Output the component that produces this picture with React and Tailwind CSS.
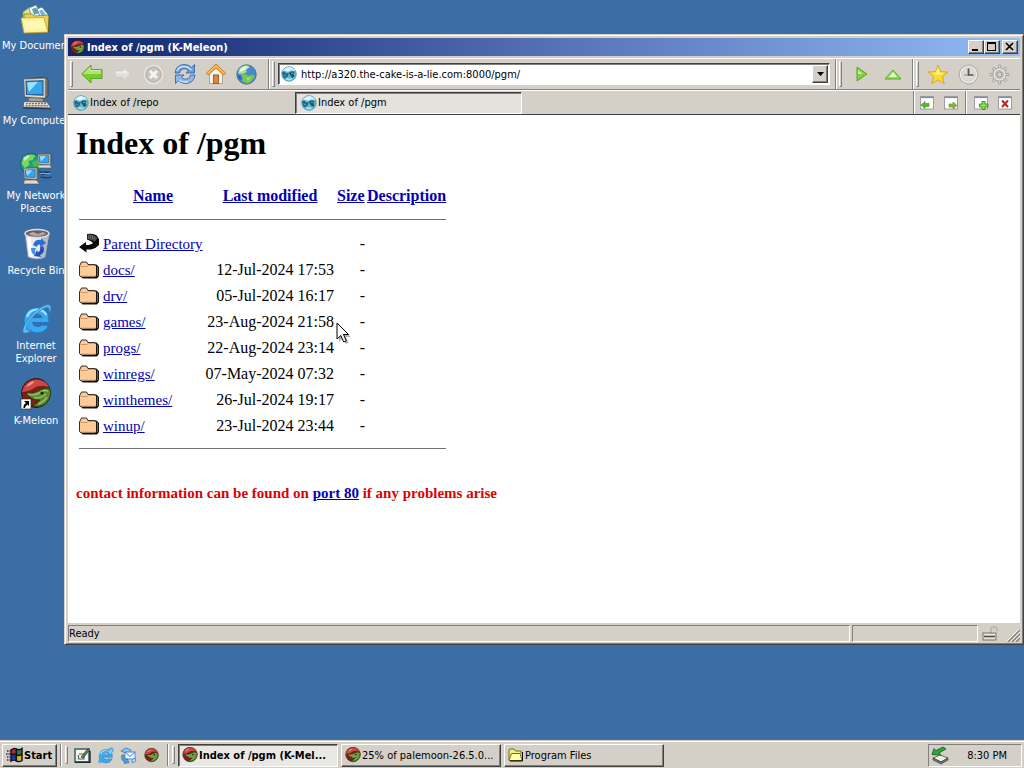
import { useState } from 'react'

const raised = "bg-[#d4d0c8] border border-t-white border-l-white border-r-[#404040] border-b-[#404040] shadow-[inset_-1px_-1px_0_#808080]"
const pressed = "border border-t-[#404040] border-l-[#404040] border-r-white border-b-white shadow-[inset_1px_1px_0_#808080]"
const sunken = "border border-t-[#808080] border-l-[#808080] border-r-white border-b-white"
const iconButton = "w-[31px] h-6 shrink-0 flex items-center justify-center"
const linkClass = "text-[#0000b8] underline"

const entries = [
    { name: 'docs/', date: '12-Jul-2024 17:53' },
    { name: 'drv/', date: '05-Jul-2024 16:17' },
    { name: 'games/', date: '23-Aug-2024 21:58' },
    { name: 'progs/', date: '22-Aug-2024 23:14' },
    { name: 'winregs/', date: '07-May-2024 07:32' },
    { name: 'winthemes/', date: '26-Jul-2024 19:17' },
    { name: 'winup/', date: '23-Jul-2024 23:44' },
]

/* ---------- Desktop icons ---------- */

function DocumentsIcon() {
    return (
        <svg width="32" height="32" viewBox="0 0 32 32" aria-hidden="true">
            <path d="M3 9 L10 4 L15 9 L15 15 L3 16Z" fill="#d9e87a" stroke="#8a9a3a" strokeWidth=".6" />
            <path d="M9 5 L16 2 L22 12 L12 16Z" fill="#f2f6fa" stroke="#5f7f95" strokeWidth=".7" />
            <path d="M12 6 L16 4.500 L19 10 L14 12Z" fill="#54a6b8" />
            <path d="M17 6 L22 4 L30 14 L22 18Z" fill="#fff" stroke="#4b6f94" strokeWidth=".8" />
            <path d="M19 8 L22 6.500 L27 13 L23 15Z" fill="#70b5dd" />
            <path d="M4 11 L12 11 L14 13 L29 12 L28 29 L4 29Z" fill="#e9cf5a" stroke="#9c8420" strokeWidth=".8" />
            <path d="M1 15 L24 14.500 L28 29 L4 30Z" fill="#fdf196" stroke="#c2a63a" strokeWidth=".8" />
            <path d="M4 18 L23 17.500 L25 26 L6 27Z" fill="#fff7b5" />
            <path d="M28 12.500 L29.500 13 L28.500 29" fill="none" stroke="#6b5a10" strokeWidth="1" />
        </svg>
    )
}

function Monitor({ x = 0, y = 0, s = 1 }) {
    return (
        <g transform={`translate(${x} ${y}) scale(${s})`}>
            <path d="M3 3 L24 1 L27 3 L27 19 L24 21 L4 20Z" fill="#77776f" stroke="#3b3b3b" strokeWidth=".8" />
            <path d="M3 3 L24 2.500 L24 20.500 L4 19.500Z" fill="#e6e2da" stroke="#9b978e" strokeWidth=".6" />
            <path d="M5 5 L22 4.500 L22 18 L5.500 17.500Z" fill="#38a4ea" stroke="#174a7c" strokeWidth="1" />
            <path d="M6 6 L17 5.500 L8 15Z" fill="#9be0ff" />
        </g>
    )
}

function ComputerIcon() {
    return (
        <svg width="32" height="34" viewBox="0 0 32 32" preserveAspectRatio="none" className="-mt-[2px]" aria-hidden="true">
            <path d="M9 20 L22 20 L24 24 L8 24Z" fill="#a5a199" stroke="#55534e" strokeWidth=".7" />
            <Monitor x="1" y="0" />
            <path d="M4 24 L27 24.500 L31 30 L3 29.500Z" fill="#e8e4dc" stroke="#55534e" strokeWidth=".8" />
            <path d="M6 26 H26 M5.500 28 H28" stroke="#77736b" strokeWidth="1.200" strokeDasharray="2 1" />
            <path d="M3 30 L31 31" stroke="#24364c" strokeWidth="1" />
        </svg>
    )
}

function NetworkIcon() {
    return (
        <svg width="34" height="32" viewBox="0 0 33 32" aria-hidden="true">
            <circle cx="11.500" cy="11" r="10.500" fill="#1b9c86" stroke="#0e5a5c" strokeWidth=".8" />
            <path d="M4 4 Q10 0 16 2.500 L13 7 L9 8 L10 12 L5 15 L2 10Z" fill="#7cd65a" />
            <path d="M12 9 L18 7 L20 12 L15 15Z" fill="#45b95a" />
            <path d="M4 5 L9 2 L10 4 L5 8Z" fill="#c6f2c0" />
            <Monitor x="17" y="0" s=".56" />
            <path d="M18 12 L31 12 L32 15 L19 15Z" fill="#ddd9d0" stroke="#55534e" strokeWidth=".6" />
            <Monitor x="3" y="14" s=".58" />
            <path d="M5 27 L17 27 L20 31 L4 31Z" fill="#ddd9d0" stroke="#55534e" strokeWidth=".6" />
            <path d="M20 19 L31 19 M22 22 L29 19 M21 24 L28 25 L32 24" stroke="#132f60" strokeWidth="1.200" fill="none" />
            <path d="M21 20.500 L31 20.500" stroke="#8fc6f0" strokeWidth=".8" />
        </svg>
    )
}

function RecycleIcon() {
    return (
        <svg width="32" height="32" viewBox="0 0 32 32" aria-hidden="true">
            <path d="M5 5 L29 6 L25 29 Q17 33 8 29Z" fill="#e7e9ee" stroke="#8a8f9c" strokeWidth=".8" />
            <path d="M22 7 L29 6 L25 29 L20 31Z" fill="#b3b8c6" />
            <path d="M7 9 L11 10 L12 29 L9 28Z" fill="#fff" />
            <ellipse cx="17" cy="5.500" rx="12" ry="4" fill="#63636d" stroke="#e4dcdc" strokeWidth="1.400" />
            <path d="M8 6 L13 4 L18 6 L23 4 L26 6 Q17 10 8 6Z" fill="#b9a5a2" />
            <path d="M13 17 Q15 11 21 12 L21 10 L26 15 L20 19 L20 16.500 Q17 16 17 19Z" fill="#2c6fd0" />
            <path d="M23 18 Q26 24 20 27 L21 29 L14 28 L17 22 L18 24.500 Q21 22 20 19Z" fill="#2451b2" />
            <path d="M11 20 L16 20 L15 23 Q15 25 16 27 Q11 27 11 20Z" fill="#4a90e6" />
        </svg>
    )
}

function ExplorerIcon({ size = 32 }) {
    return (
        <svg width={size} height={size} viewBox="0 0 32 32" aria-hidden="true">
            <path d="M29 19.500 H12.500 Q13 23.500 17.500 23.500 Q20.500 23.500 22 22 L28.500 22.500 Q25 30 17 30 Q4 29 4 17.500 Q4.500 5 17 4.500 Q30 5.500 29 19.500Z M12.500 14.500 H22 Q21 11 17 11 Q13.500 11 12.500 14.500Z" fill="#3aa9ee" stroke="#1a6fc0" strokeWidth=".8" fillRule="evenodd" />
            <path d="M7 14 Q9 7 17 6.500 Q24 7 26.500 12" fill="none" stroke="#a6e4ff" strokeWidth="2.200" />
            <path d="M5 21 Q1 29 4 30 Q7 31 12 27 Q5 29 7 22 Q14 10 25 5 Q30 3 29 9 L30 10 Q33 1 27 1.500 Q15 5 5 21Z" fill="#5cb9ee" stroke="#1e73bd" strokeWidth=".5" />
        </svg>
    )
}

function MeleonIcon({ size = 16, shortcut = false }) {
    return (
        <svg width={size} height={size} viewBox="0 0 32 32" className="shrink-0" aria-hidden="true">
            <circle cx="16" cy="15" r="14.500" fill="#7c1f18" stroke="#3a120c" strokeWidth="1" />
            <path d="M2 14 Q4 3 16 1.500 Q26 2 29 9 Q20 6 14 10 Q8 14 2 14Z" fill="#c94a44" />
            <path d="M6 9 Q9 4 14 3 Q14 6 6 9Z" fill="#f5a196" />
            <path d="M5 14 Q11 17 18 13 Q24 9 30 11 Q32 18 27 24 Q20 31 12 27 Q18 26 20 22 Q12 23 5 14Z" fill="#5c8a34" stroke="#1d3a10" strokeWidth=".8" />
            <path d="M8 16 Q14 18 19 15 Q24 11 28 13 M14 20 Q22 20 26 16 M18 26 Q24 24 27 19" fill="none" stroke="#93bf5c" strokeWidth="1.600" />
            <circle cx="22" cy="15" r="1.600" fill="#162b0c" />
            {shortcut && (
                <g>
                    <rect x="1" y="21" width="10" height="10" fill="#fff" stroke="#222" strokeWidth=".6" />
                    <path d="M4 23 H9 V28 L7.500 26.500 Q5 28 5 30 L3.500 30 Q3 27 6 25Z" fill="#000" />
                </g>
            )}
        </svg>
    )
}

/* ---------- Browser icons ---------- */

function PageGlobe() {
    return (
        <svg width="16" height="16" viewBox="0 0 16 16" className="shrink-0" aria-hidden="true">
            <circle cx="8" cy="8" r="7.300" fill="#5fb4ce" stroke="#4f97b0" strokeWidth=".8" />
            <path d="M1.500 5.500 Q4 .8 9 1.100 Q13 2 14.500 5 L10 4.500 L7 6 L4 5Z" fill="#d6eff7" />
            <path d="M1 6 L3.500 5.500 L5 7.500 L7.500 7 L7 10 L4.500 12.500 L2.500 11.500Z" fill="#236880" />
            <path d="M7.500 7 L10 5.500 L13.500 5.500 L12.500 8 L13.500 10.500 L11 12 L9.500 9.500Z" fill="#1d5a72" />
            <path d="M4 13 Q6 11.500 8.500 12.500 L12 12.500 Q9 16 4 13Z" fill="#a8e2f2" />
            <path d="M5 4 L9 3" stroke="#fff" strokeWidth="1.200" />
            <path d="M3 9 L5 10 M10 7.500 L12 7" stroke="#66b2c8" strokeWidth=".9" />
        </svg>
    )
}

function BackIcon() {
    return (
        <svg width="22" height="20" viewBox="0 0 22 20" aria-hidden="true">
            <path d="M.7 10 L10 1 V5.500 H21 V14.500 H10 V19Z" fill="#79cc2c" stroke="#5da42c" />
            <path d="M3 10 L9 4 V7 H20 V10Z" fill="#aee86a" />
            <path d="M2.500 10 L9 3.500 V6.500 H20" fill="none" stroke="#e2fac4" strokeWidth=".8" />
        </svg>
    )
}

function ForwardIcon() {
    return (
        <svg width="18" height="16" viewBox="0 0 22 20" aria-hidden="true">
            <path d="M21 10 L11 1 V6 H1 V14 H11 V19Z" fill="#e2e0db" stroke="#c9c5be" />
            <path d="M2 7 H12 V4 L18 9 H2Z" fill="#efede9" />
        </svg>
    )
}

function StopIcon() {
    return (
        <svg width="21" height="21" viewBox="0 0 21 21" aria-hidden="true">
            <circle cx="10.500" cy="10.500" r="9" fill="#c6c4bf" stroke="#e6e4e0" strokeWidth="1.500" />
            <circle cx="10.500" cy="10.500" r="7.500" fill="none" stroke="#aeaca6" strokeWidth=".8" />
            <path d="M7 7 L14 14 M14 7 L7 14" stroke="#f6f5f2" strokeWidth="3" />
        </svg>
    )
}

function ReloadIcon() {
    return (
        <svg width="22" height="22" viewBox="0 0 22 22" aria-hidden="true">
            <path d="M1 10 Q2 2 10 1.500 Q15 1.500 17.500 4.500 L20.500 1.500 V10 H12 L14.500 7.500 Q12 5 9 6 Q6 6.500 5.500 10Z" fill="#6d9fdc" stroke="#3a68a8" strokeWidth=".9" />
            <path d="M21 12 Q20 20 12 20.500 Q7 20.500 4.500 17.500 L1.500 20.500 V12 H10 L7.500 14.500 Q10 17 13 16 Q16 15.500 16.500 12Z" fill="#8ab8ec" stroke="#3a68a8" strokeWidth=".9" />
            <path d="M3 8 Q5 3 11 3.500 Q15 4 17.500 7 M5 17 Q9 20 14 18.500" fill="none" stroke="#cfe4fb" strokeWidth="1.400" />
        </svg>
    )
}

function HomeIcon() {
    return (
        <svg width="20" height="22" viewBox="0 0 20 22" aria-hidden="true">
            <path d="M3.500 10 L10 4 L16.500 10 V20.500 H3.500Z" fill="#f4f2ec" stroke="#98948a" strokeWidth=".8" />
            <rect x="7.500" y="12" width="5" height="8.500" fill="#d98a3e" stroke="#8e4b12" strokeWidth=".8" />
            <path d="M10 1 L19.500 10 L17.500 12 L10 5 L2.500 12 L.5 10Z" fill="#f9a63b" stroke="#c96e0d" strokeWidth=".8" />
            <path d="M2 10 L10 2.500 L18 10" fill="none" stroke="#ffd08a" strokeWidth=".8" />
        </svg>
    )
}

function WorldIcon() {
    return (
        <svg width="21" height="21" viewBox="0 0 21 21" aria-hidden="true">
            <circle cx="10.500" cy="10.500" r="9.700" fill="#4a88d0" stroke="#3f6ba4" strokeWidth=".9" />
            <path d="M2 9 Q3 2 10 1.300 Q13 1.500 14 3 L10 6 L11 8 L7 10 L3 10Z" fill="#a8dc90" />
            <path d="M5 10.500 L10 10 L12 12 L18 10.500 L18.500 13 Q15.500 18.500 11 19.500 L6 17 L7 14Z" fill="#76c84a" />
            <path d="M3.500 6.500 Q6 2 12 2.200 L10 5 L5 8Z" fill="#f0fbfa" opacity=".9" />
            <path d="M10 14 L15 13 L12 17Z" fill="#a6e07c" />
            <path d="M1.500 11 L4.500 12 L5.500 16 L3.500 15.500Z" fill="#2b5fb0" />
        </svg>
    )
}

function StarIcon() {
    return (
        <svg width="22" height="21" viewBox="0 0 22 21" aria-hidden="true">
            <path d="M11 1 L13.700 7.700 L21 8 L15.400 12.600 L17.300 19.700 L11 15.800 L4.700 19.700 L6.600 12.600 L1 8 L8.300 7.700Z" fill="#f8dc30" stroke="#cfa524" strokeWidth=".9" />
            <path d="M11 3 L12.800 8.700 L18 9 L11 11 L4 9 L9.200 8.700Z" fill="#fff08a" />
        </svg>
    )
}

function ClockIcon() {
    return (
        <svg width="21" height="21" viewBox="0 0 21 21" aria-hidden="true">
            <circle cx="10.500" cy="10.500" r="9.300" fill="#f0efec" stroke="#b4b2ad" strokeWidth="1.200" />
            <circle cx="10.500" cy="10.500" r="7" fill="#dcdad5" stroke="#c8c6c0" strokeWidth=".7" />
            <path d="M10.500 4.500 V11 H15.500" fill="none" stroke="#55534f" strokeWidth="1.700" />
            <path d="M6 11 H10" stroke="#8a8883" />
        </svg>
    )
}

function GearIcon() {
    return (
        <svg width="21" height="21" viewBox="0 0 21 21" aria-hidden="true">
            <path d="M10.500 .8 V5 M10.500 16 V20.200 M.8 10.500 H5 M16 10.500 H20.200 M3.600 3.600 L6.500 6.500 M14.500 14.500 L17.400 17.400 M17.400 3.600 L14.500 6.500 M6.500 14.500 L3.600 17.400" stroke="#a3a19c" strokeWidth="3" />
            <path d="M10.500 1.500 V5 M10.500 16 V19.500 M1.500 10.500 H5 M16 10.500 H19.500 M4 4 L6.500 6.500 M14.500 14.500 L17 17 M17 4 L14.500 6.500 M6.500 14.500 L4 17" stroke="#e4e2de" strokeWidth="1.200" />
            <circle cx="10.500" cy="10.500" r="5.200" fill="none" stroke="#a09e99" strokeWidth="3.600" />
            <circle cx="10.500" cy="10.500" r="5.200" fill="none" stroke="#e6e4e0" strokeWidth="2" />
            <circle cx="10.500" cy="10.500" r="2.600" fill="#d4d0c8" stroke="#8f8d88" strokeWidth=".8" />
        </svg>
    )
}

function TabPage({ children }) {
    return (
        <svg width="15" height="14" viewBox="0 0 15 14" aria-hidden="true">
            <rect x=".5" y=".5" width="13" height="12.500" fill="#fff" stroke="#9c9ca2" />
            <path d="M1 1.500 H13" stroke="#6a8cd0" strokeWidth="1.200" />
            {children}
        </svg>
    )
}

/* ---------- Directory listing icons ---------- */

function FolderIcon() {
    return (
        <svg width="20" height="22" viewBox="0 0 20 22" className="block" aria-hidden="true">
            <path d="M3 5 H9 L11 5.500 H17.500 L20 8 V17 L18 19.500 H3.500 L2 17Z" fill="#1a1208" />
            <path d="M.5 7 L2.500 3 H7.500 L9 5.500 H16 L17.500 7.500 V16.500 L16.500 18 H2 L.5 16.500Z" fill="#fccb98" stroke="#000" strokeWidth=".8" />
            <path d="M1.500 7.500 H8 L9.500 6.300 H16" fill="none" stroke="#c4885a" strokeWidth=".8" />
            <path d="M2 16.700 H16.500" stroke="#dba874" strokeWidth="1.200" strokeDasharray="1 1" />
            <path d="M18.500 8 V17" stroke="#8a5a30" strokeWidth="1" />
        </svg>
    )
}

function UpIcon() {
    return (
        <svg width="20" height="22" viewBox="0 0 20 22" className="block" aria-hidden="true">
            <path d="M8 1 Q17 0 19 4.500 L20 6 V12 Q17 15.500 12 16.500 H7.500 V19.500 L0 14 L7 9 V12 Q12 12 14 10 Q12 7.500 8 6.500Z" fill="#0a0a0a" />
            <path d="M8.500 1.500 Q15 1 18.500 5 L16 8.500 Q13 6.500 8.500 6Z" fill="#4a4a4a" />
            <path d="M9 3 H15 M9 5 H17" stroke="#999" strokeWidth=".7" strokeDasharray="1 1" />
        </svg>
    )
}

/* ---------- Pieces ---------- */

function DesktopIcon({ icon, label }) {
    return (
        <button type="button" className="h-[75px] pt-[3px] flex flex-col items-center gap-1 text-white">
            {icon}
            <span className="w-[68px] leading-[13px] text-center whitespace-pre">{label}</span>
        </button>
    )
}

function Gripper() {
    return <div className="w-[3px] my-[2px] self-stretch shrink-0 border border-t-white border-l-white border-r-[#808080] border-b-[#808080]" />
}

function Divider() {
    return <div className="w-[2px] self-stretch shrink-0 border-l border-l-[#808080] border-r border-r-white" />
}

function ToolButton({ label, children }) {
    return (
        <button type="button" aria-label={label} className={iconButton}>{children}</button>
    )
}

function SmallButton({ label, children }) {
    return (
        <button type="button" aria-label={label} className="w-6 h-5 flex items-center justify-center">{children}</button>
    )
}

function LaunchButton({ label, children }) {
    return (
        <button type="button" aria-label={label} className="w-[23px] h-5 flex items-center justify-center">{children}</button>
    )
}

function TitleBar() {
    const button = `w-4 h-[14px] flex items-center justify-center ${raised}`
    return (
        <div className="h-[18px] shrink-0 flex items-center px-[2px] bg-linear-to-r from-[#10246e] via-[#5470b4] to-[#92bcf4]">
            <MeleonIcon size={15} />
            <h1 className="ml-[2px] flex-1 text-white font-bold whitespace-nowrap">Index of /pgm (K-Meleon)</h1>
            <button type="button" aria-label="Minimize" className={button}>
                <svg width="10" height="10" viewBox="0 0 10 10" shapeRendering="crispEdges"><path d="M1 7 H7 V9 H1Z" /></svg>
            </button>
            <button type="button" aria-label="Maximize" className={button}>
                <svg width="10" height="10" viewBox="0 0 10 10" shapeRendering="crispEdges"><path d="M0 0 H9 V9 H0Z M1 2 V8 H8 V2Z" fillRule="evenodd" /></svg>
            </button>
            <button type="button" aria-label="Close" className={`ml-[2px] ${button}`}>
                <svg width="10" height="10" viewBox="0 0 10 10"><path d="M1 1 L8 8 M8 1 L1 8" stroke="#000" strokeWidth="1.700" /></svg>
            </button>
        </div>
    )
}

function Toolbar() {
    const [url, setUrl] = useState('http://a320.the-cake-is-a-lie.com:8000/pgm/')
    return (
        <div className="h-8 shrink-0 flex items-center pl-[2px] pr-[5px] border-t border-t-white border-b border-b-[#808080]">
            <Gripper />
            <div className="flex pl-[3px] pr-[6px]">
                <ToolButton label="Back"><BackIcon /></ToolButton>
                <ToolButton label="Forward"><ForwardIcon /></ToolButton>
                <ToolButton label="Stop"><StopIcon /></ToolButton>
                <ToolButton label="Reload"><ReloadIcon /></ToolButton>
                <ToolButton label="Home"><HomeIcon /></ToolButton>
                <ToolButton label="Go to site"><WorldIcon /></ToolButton>
            </div>
            <Divider />
            <div className="w-[2px]" />
            <Gripper />
            <div className={`ml-[3px] flex-1 min-w-0 h-[22px] flex items-center bg-white pl-[2px] pr-px ${pressed}`}>
                <PageGlobe />
                <input
                    type="text"
                    aria-label="Address"
                    value={url}
                    onChange={e => setUrl(e.target.value)}
                    className="ml-1 flex-1 min-w-0 text-black focus:outline-none"
                />
                <button type="button" aria-label="Show history" className={`w-4 h-[18px] flex items-center justify-center ${raised}`}>
                    <svg width="7" height="4" viewBox="0 0 7 4"><path d="M0 0 H7 L3.500 4Z" /></svg>
                </button>
            </div>
            <div className="w-[5px]" />
            <Divider />
            <div className="w-[2px]" />
            <Gripper />
            <div className="flex px-1">
                <ToolButton label="Go">
                    <svg width="12" height="16" viewBox="0 0 12 16"><path d="M1 1 L11 8 L1 15Z" fill="#84cf3a" stroke="#5da42c" /><path d="M2 4 L7 8 H2Z" fill="#c9f295" /></svg>
                </ToolButton>
                <ToolButton label="Up">
                    <svg width="18" height="11" viewBox="0 0 18 11"><path d="M9 1 L17 10 H1Z" fill="#9bdc56" stroke="#5da42c" /><path d="M9 3 L13 8 H5Z" fill="#e2f8c6" /></svg>
                </ToolButton>
            </div>
            <Divider />
            <div className="w-[2px]" />
            <Gripper />
            <div className="flex pl-[3px]">
                <ToolButton label="Bookmarks"><StarIcon /></ToolButton>
                <ToolButton label="History"><ClockIcon /></ToolButton>
                <ToolButton label="Preferences"><GearIcon /></ToolButton>
            </div>
        </div>
    )
}

function TabBar() {
    return (
        <div className="h-[25px] shrink-0 flex items-center pl-1 pr-[3px] border-t border-t-white border-b border-b-[#404040]">
            <button type="button" className="w-[223px] h-[22px] flex items-center gap-px pl-px">
                <PageGlobe />
                <span>Index of /repo</span>
            </button>
            <button type="button" className={`w-[227px] h-[22px] flex items-center gap-px pl-[5px] bg-[#e4e2dd] ${pressed}`}>
                <PageGlobe />
                <span>Index of /pgm</span>
            </button>
            <div className="flex-1" />
            <Divider />
            <SmallButton label="Previous tab">
                <TabPage><path d="M1 9 L5 5.500 V7.500 H9 V10.500 H5 V12.500Z" fill="#5cb52c" stroke="#3f8d24" strokeWidth=".6" /></TabPage>
            </SmallButton>
            <SmallButton label="Next tab">
                <TabPage><path d="M13 9.500 L9 6 V8 H5 V11 H9 V13Z" fill="#8ab53c" stroke="#5a8d24" strokeWidth=".6" /></TabPage>
            </SmallButton>
            <div className="w-[2px]" />
            <Divider />
            <div className="w-[2px]" />
            <SmallButton label="New tab">
                <TabPage><path d="M8 5.500 H11 V8 H14 V11 H11 V13.500 H8 V11 H5.500 V8 H8Z" fill="#8ada54" stroke="#2f7d14" strokeWidth=".8" /></TabPage>
            </SmallButton>
            <SmallButton label="Close tab">
                <TabPage><path d="M4 4.500 L10 11 M10 4.500 L4 11" stroke="#b82424" strokeWidth="2" /></TabPage>
            </SmallButton>
        </div>
    )
}

function Listing() {
    return (
        <main className="flex-1 min-h-0 overflow-hidden bg-white px-2 text-black font-['Liberation_Serif',serif] text-[16px] leading-5">
            <h2 className="mt-[10px] mb-[22px] text-[32px] leading-9 font-bold">Index of /pgm</h2>
            <table className="ml-[3px] w-[367px] table-fixed border-collapse">
                <thead>
                    <tr className="h-[26px]">
                        <th className="w-6"></th>
                        <th className="w-[100px]"><a href="#name" className={linkClass}>Name</a></th>
                        <th className="w-[134px]"><a href="#modified" className={linkClass}>Last modified</a></th>
                        <th className="w-[30px] text-left"><a href="#size" className={linkClass}>Size</a></th>
                        <th className="whitespace-nowrap text-right"><a href="#description" className={linkClass}>Description</a></th>
                    </tr>
                    <tr className="h-[22px]"><th colSpan="5" className="align-middle"><hr className="-mt-px border-t border-t-[#707070]" /></th></tr>
                </thead>
                <tbody>
                    <tr className="h-[26px]">
                        <td><UpIcon /></td>
                        <td colSpan="2" className="text-[15px]"><a href="#parent" className={linkClass}>Parent Directory</a></td>
                        <td className="text-right pr-[2px]">-</td>
                        <td></td>
                    </tr>
                    {entries.map(entry => (
                        <tr key={entry.name} className="h-[26px]">
                            <td><FolderIcon /></td>
                            <td className="text-[15px]"><a href={`#${entry.name}`} className={linkClass}>{entry.name}</a></td>
                            <td className="text-right pr-[3px] whitespace-nowrap">{entry.date}</td>
                            <td className="text-right pr-[2px]">-</td>
                            <td></td>
                        </tr>
                    ))}
                    <tr className="h-[18px]"><td colSpan="5" className="align-middle"><hr className="border-t border-t-[#707070]" /></td></tr>
                </tbody>
            </table>
            <p className="mt-[26px] text-[15px] font-bold text-[#e00000]">
                contact information can be found on <a href="#port80" className={linkClass}>port 80</a> if any problems arise
            </p>
        </main>
    )
}

function StatusBar() {
    return (
        <div className="h-[19px] shrink-0 flex pt-[2px] gap-[2px]">
            <div className={`flex-1 leading-[15px] ${sunken}`}>Ready</div>
            <div className={`w-[126px] ${sunken}`} />
            <div className="w-10 flex items-center justify-between pl-[2px]">
                <svg width="18" height="15" viewBox="0 0 18 15" aria-hidden="true">
                    <path d="M9 7 V4 Q9 1 12 1 Q15 1 15 4 V5" fill="none" stroke="#b0aca4" strokeWidth="2" strokeDasharray="1.500 .8" />
                    <rect x="1" y="7" width="13" height="7" fill="#e4e1da" stroke="#77746e" />
                    <path d="M2 10.500 H13" stroke="#4c4a45" strokeWidth="1.500" />
                </svg>
                <svg width="13" height="13" viewBox="0 0 13 13" className="self-end" aria-hidden="true">
                    <path d="M1 13 L13 1 M5 13 L13 5 M9 13 L13 9" stroke="#808080" strokeWidth="1.400" />
                    <path d="M0 12 L12 0 M4 12 L13 3 M8 12 L13 7" stroke="#fff" strokeWidth=".8" />
                </svg>
            </div>
        </div>
    )
}

function TaskButton({ icon, label, active }) {
    return (
        <button
            type="button"
            className={`w-40 h-[23px] min-w-0 flex items-center gap-px pl-[3px] ${active ? `bg-[#eae8e3] font-bold ${pressed}` : raised}`}
        >
            {icon}
            <span className="whitespace-nowrap">{label}</span>
        </button>
    )
}

function Taskbar() {
    return (
        <footer className="h-7 shrink-0 flex items-center px-[2px] bg-[#d4d0c8] border-t border-t-[#d4d0c8] shadow-[inset_0_1px_0_#fff] pt-px">
            <button type="button" className={`w-[55px] h-[23px] flex items-center gap-px pl-[3px] font-bold ${raised}`}>
                <svg width="17" height="16" viewBox="0 0 17 16" className="shrink-0" aria-hidden="true">
                    <path d="M5 3 Q8 1 10 2.500 V7.500 Q8 6 5 8Z" fill="#a8323c" />
                    <path d="M10.500 2.500 Q13 4 16 2 V7 Q13 9 10.500 7.500Z" fill="#2f7f3a" />
                    <path d="M5 8.500 Q8 6.500 10 8 V13 Q8 11.500 5 13.500Z" fill="#2430a8" />
                    <path d="M10.500 8 Q13 9.500 16 7.500 V12.500 Q13 14.500 10.500 13Z" fill="#d6b422" />
                    <path d="M5 3 Q8 .8 10.300 2 Q13 3.500 16 1.500 V13.500 Q13 15.500 10.300 13.800 Q8 12 5 14Z M10.300 2 V14 M5 8.200 Q8 6 10.300 7.700 Q13 9.500 16 7.200" fill="none" stroke="#111" strokeWidth="1.500" />
                    <path d="M1 4 H4.500 M0 7 H4 M1 10 H4.500 M1 13 H4" stroke="#5a1a70" strokeWidth="1.600" strokeDasharray="1.500 1" />
                </svg>
                <span>Start</span>
            </button>
            <div className="w-[3px]" />
            <div className="h-[22px] flex"><Divider /></div>
            <div className="w-[3px]" />
            <div className="h-[22px] flex"><Gripper /></div>
            <div className="flex pl-[3px] pr-1">
                <LaunchButton label="Show desktop">
                    <svg width="17" height="16" viewBox="0 0 17 16">
                        <rect x="1" y="2" width="14" height="13" fill="#f4f3ee" stroke="#3f5e68" strokeWidth="1.500" />
                        <path d="M1 15.300 H16 V4" fill="none" stroke="#1b2b30" strokeWidth="1.400" />
                        <path d="M5 7 H10 V12 H4.500 V8" fill="none" stroke="#4a6f58" strokeWidth="1.200" />
                        <path d="M7 10 L14 1.500 L16 3 L9 11Z" fill="#5b8050" stroke="#1d2f20" strokeWidth=".6" />
                    </svg>
                </LaunchButton>
                <LaunchButton label="Internet Explorer"><ExplorerIcon size={17} /></LaunchButton>
                <LaunchButton label="Outlook Express">
                    <svg width="17" height="17" viewBox="0 0 17 17">
                        <path d="M1 4 L6 1 L11 3 L8 7Z" fill="#8ec9f2" stroke="#2a68b4" strokeWidth=".7" />
                        <rect x="5" y="5" width="10" height="7" fill="#eef7ff" stroke="#4a7cc0" strokeWidth=".9" />
                        <path d="M5 5 L10 9.500 L15 5" fill="none" stroke="#4a7cc0" />
                        <path d="M2 8 Q0 13 5 15 L4 16.500 L9 15.500 L7 11.500 L6 13 Q3 12 4 8Z" fill="#4ba0e8" stroke="#1f5fae" strokeWidth=".6" />
                        <path d="M12 13 L15 11 L16 14 L12 16Z" fill="#b8dcf8" stroke="#2a68b4" strokeWidth=".6" />
                    </svg>
                </LaunchButton>
                <LaunchButton label="K-Meleon"><MeleonIcon size={15} /></LaunchButton>
            </div>
            <div className="h-[22px] flex"><Divider /></div>
            <div className="w-[3px]" />
            <div className="h-[22px] flex"><Gripper /></div>
            <div className="flex-1 min-w-0 flex gap-[3px] px-[3px]">
                <TaskButton active icon={<MeleonIcon size={16} />} label="Index of /pgm (K-Mel..." />
                <TaskButton icon={<MeleonIcon size={16} />} label="25% of palemoon-26.5.0..." />
                <TaskButton
                    icon={(
                        <svg width="16" height="14" viewBox="0 0 16 14" className="shrink-0" aria-hidden="true">
                            <path d="M1 12 V2 L2 1 H6 L7.500 3 H13 V6" fill="#f6f08a" stroke="#77700f" />
                            <path d="M1 12.500 L3.500 5.500 H12 L14 12.500Z" fill="#ffffa8" stroke="#77700f" />
                            <path d="M14.500 4 V13 H2" fill="none" stroke="#000" />
                        </svg>
                    )}
                    label="Program Files"
                />
            </div>
            <div className={`w-[94px] h-[23px] flex items-center justify-between pl-[2px] pr-[14px] ${sunken}`}>
                <svg width="19" height="19" viewBox="0 0 19 19" aria-hidden="true">
                    <path d="M2 12 L9 9 L17 12 L10 16Z" fill="#f0eee8" stroke="#444" strokeWidth=".8" />
                    <path d="M2 12 V14 L10 18 L17 14 V12 L10 16Z" fill="#777" stroke="#333" strokeWidth=".6" />
                    <path d="M1 8.500 L3 2.500 L5 4.500 L12 1 L15 3 L8 7 L10 9Z" fill="#2fa53a" stroke="#0e5a18" strokeWidth=".8" />
                </svg>
                <time className="whitespace-nowrap">8:30 PM</time>
            </div>
        </footer>
    )
}

function App() {
    return (
        <div className="h-screen flex flex-col overflow-hidden bg-[#3b6ea5] text-black font-['DejaVu_Sans_Condensed',sans-serif] text-[11px] leading-[13px] select-none">
            <div className="flex-1 min-h-0 relative">
                <nav aria-label="Desktop" className="w-[72px] flex flex-col">
                    <DesktopIcon icon={<DocumentsIcon />} label="My Documents" />
                    <DesktopIcon icon={<ComputerIcon />} label="My Computer" />
                    <DesktopIcon icon={<NetworkIcon />} label={'My Network\nPlaces'} />
                    <DesktopIcon icon={<RecycleIcon />} label="Recycle Bin" />
                    <DesktopIcon icon={<ExplorerIcon />} label={'Internet\nExplorer'} />
                    <DesktopIcon icon={<MeleonIcon size={32} shortcut />} label="K-Meleon" />
                </nav>

                {/* Browser window */}
                <section className="absolute left-16 top-[34px] right-0 bottom-[95px] flex flex-col p-[3px] pb-[2px] bg-[#d4d0c8] border border-t-[#d4d0c8] border-l-[#d4d0c8] border-r-[#404040] border-b-[#404040] shadow-[inset_1px_1px_0_#fff,inset_-1px_-1px_0_#808080]">
                    <TitleBar />
                    <div className="h-[2px] shrink-0" />
                    <Toolbar />
                    <TabBar />
                    <Listing />
                    <StatusBar />
                </section>

                {/* Mouse pointer */}
                <svg width="15" height="24" viewBox="0 0 15 24" className="absolute left-[336px] top-[322px]" aria-hidden="true">
                    <path d="M3 4 V20 L7 16 L10 22 L12.500 21 L10 15 H15Z" fill="#000" opacity=".3" />
                    <path d="M1 1 V17 L4.800 13.500 L7.800 20 L10.300 19 L7.500 12.500 H12.500Z" fill="#fff" stroke="#000" strokeWidth="1" />
                </svg>
            </div>
            <Taskbar />
        </div>
    )
}

export default App
